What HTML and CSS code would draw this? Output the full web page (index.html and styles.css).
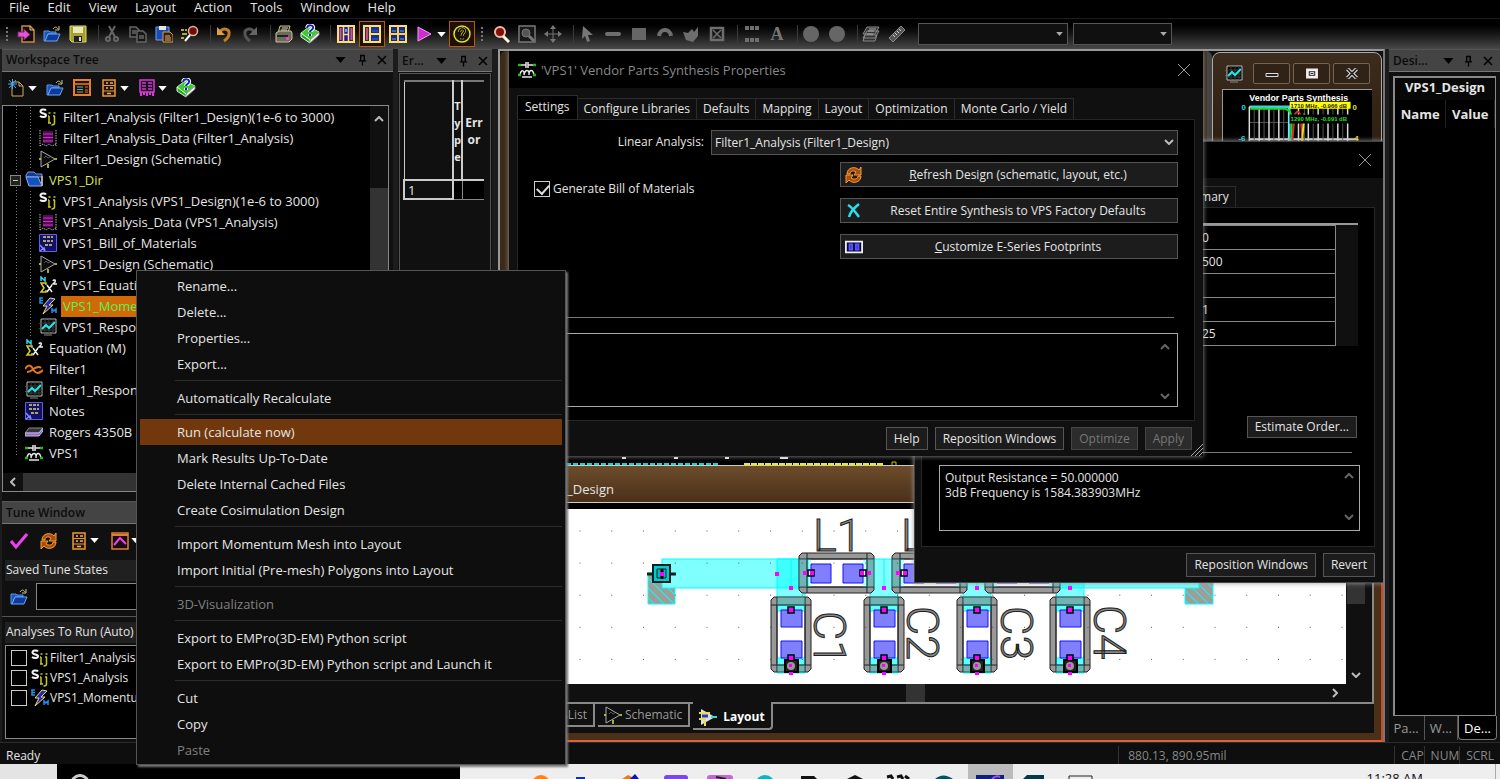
FILE: index.html
```
<!DOCTYPE html>
<html lang="en">
<head>
    <meta charset="UTF-8">
    <meta name="viewport" content="width=device-width, initial-scale=1.0">
    <title>Vendor Parts Synthesis</title>
    <link rel="stylesheet" href="styles.css">
</head>
<body>
    <svg class="sprite" aria-hidden="true">
        <symbol id="i-import" viewBox="0 0 18 18"><path d="M5 1h8l4 4v12H5z" fill="#120c04" stroke="#c88a3c" stroke-width="1.5"/><path d="M13 1v4h4" fill="none" stroke="#e8c890"/><path d="M1 7h6V4l6 5.500-6 5.500v-3H1z" fill="#e055d8" stroke="#7a1f78"/></symbol>
        <symbol id="i-open" viewBox="0 0 18 18"><path d="M1 6h5l1 1h6v2H5l-3 7H1z" fill="#1c55c0" stroke="#5b95e8"/><path d="M2 16l3-7h12l-3 7z" fill="#0d3a9c" stroke="#6ca8f0"/><path d="M10 4c2-3 4-2 5 0M16 1v4h-4" fill="none" stroke="#c8c890"/></symbol>
        <symbol id="i-save" viewBox="0 0 18 18"><path d="M1 1h16v16H3l-2-2z" fill="#a8a02c" stroke="#e0d868"/><path d="M4 2h10v6H4z" fill="#e8e8c0"/><path d="M5 11h8v6H5z" fill="#222"/><path d="M10 12h2v4h-2z" fill="#ddd"/></symbol>
        <symbol id="i-cut" viewBox="0 0 18 18"><g fill="none" stroke="#666" stroke-width="2"><path d="M6 1l6 11M12 1L6 12"/><circle cx="5" cy="14" r="2"/><circle cx="13" cy="14" r="2"/></g></symbol>
        <symbol id="i-copy" viewBox="0 0 18 18"><g fill="#161616" stroke="#666" stroke-width="1.500"><path d="M1 2h6l3 3v7H1z"/><path d="M8 6h6l3 3v8H8z"/><path d="M3 6h4M3 8h4M10 11h5M10 13h5"/></g></symbol>
        <symbol id="i-paste" viewBox="0 0 18 18"><path d="M1 2h13v13H1z" fill="#1b4cae" stroke="#6aa4f0"/><path d="M4 1h7v4H4z" fill="#e6e6e6"/><path d="M8 7h7l3 3v7H8z" fill="#30200c" stroke="#d89c50"/><path d="M10 11h5M10 13h6M10 15h6" stroke="#e8b060"/></symbol>
        <symbol id="i-find" viewBox="0 0 18 18"><circle cx="12" cy="6" r="4.500" fill="#6a1008" stroke="#e8b0a0" stroke-width="1.500"/><path d="M9 10l-5 6" stroke="#fff" stroke-width="2"/><path d="M0 5h3M4 5h2M1 9h5M0 13h3" stroke="#e8e030" stroke-width="1.500"/></symbol>
        <symbol id="i-undo" viewBox="0 0 18 18"><path d="M5 7c3-5 10-3 9 2 0 3-2 5-5 7" fill="none" stroke="#c08020" stroke-width="3"/><path d="M2 2v8h8z" fill="#e0a040"/></symbol>
        <symbol id="i-redo" viewBox="0 0 18 18"><path d="M13 7C10 2 3 4 4 9c0 3 2 5 5 7" fill="none" stroke="#555" stroke-width="3"/><path d="M16 2v8H8z" fill="#666"/></symbol>
        <symbol id="i-print" viewBox="0 0 18 18"><path d="M5 1h10l-2 7H3z" fill="#222" stroke="#d0c890"/><path d="M1 8l3-2h12l1 2v6l-3 3H1z" fill="#6c6a58" stroke="#c8c49c"/><path d="M2 11h11" stroke="#222" stroke-width="2"/><path d="M11 12h3v3h-3z" fill="#f040e0"/><path d="M7 3h6M6 5h6" stroke="#d8d8b0"/></symbol>
        <symbol id="i-book" viewBox="0 0 20 20"><path d="M1 9l8-6 10 5-9 8z" fill="#40c838" stroke="#a8f8a0"/><path d="M1 9l9 7v3L1 13z" fill="#26a020" stroke="#e0ffe0"/><path d="M10 16l9-8v3l-9 8z" fill="#fff" stroke="#888"/><path d="M7 4c1-4 7-3 6 0 0 2-3 2-3 4M10 10v2" fill="none" stroke="#fff" stroke-width="4"/><path d="M7 4c1-4 7-3 6 0 0 2-3 2-3 4M10 10v2" fill="none" stroke="#1828a8" stroke-width="2"/></symbol>
        <symbol id="i-tile1" viewBox="0 0 18 18"><path d="M1 1h16v16H1z" fill="#28189c" stroke="#ffe060" stroke-width="2"/><path d="M6.500 1v16M11.500 1v16M6 9.500h6" stroke="#ffe060" stroke-width="1.500"/><path d="M3.500 3v12M14.500 3v12" stroke="#c05a98" stroke-width="2"/><path d="M9 4v3" stroke="#58a8f8" stroke-width="2"/></symbol>
        <symbol id="i-tile2" viewBox="0 0 18 18"><path d="M1 1h16v16H1z" fill="#1c2c9c" stroke="#ffe060" stroke-width="2"/><path d="M7 1v16M7 9h10" stroke="#ffe060" stroke-width="2"/><path d="M4 3v12" stroke="#c05068" stroke-width="2"/><path d="M9 6h6M9 14h6" stroke="#3068d0"/></symbol>
        <symbol id="i-tile3" viewBox="0 0 18 18"><path d="M1 1h16v16H1z" fill="#14288c" stroke="#ffe060" stroke-width="2"/><path d="M9 1v16M1 9h16" stroke="#ffd050" stroke-width="2"/><path d="M3 6h4M11 6h4M3 14h4M11 14h4" stroke="#58a0f0"/></symbol>
        <symbol id="i-play" viewBox="0 0 18 18"><path d="M3 2l13 7-13 7z" fill="#c830d0" stroke="#f0a0f0"/></symbol>
        <symbol id="i-ask" viewBox="0 0 18 18"><circle cx="9" cy="9" r="8" fill="#181400" stroke="#e8e020" stroke-width="1.500"/><path d="M6.500 7c0-4 5-4 5-1 0 2-2.500 2-2.500 5M9 13v1.500" fill="none" stroke="#c8c050" stroke-width="3"/><path d="M6.500 7c0-4 5-4 5-1 0 2-2.500 2-2.500 5M9 13v1.500" fill="none" stroke="#000" stroke-width="1.500"/></symbol>
        <symbol id="i-zoom" viewBox="0 0 18 18"><circle cx="8" cy="7" r="5" fill="#801004" stroke="#f0b8a8" stroke-width="2"/><path d="M11 11l6 6" stroke="#fff8d8" stroke-width="3"/></symbol>
        <symbol id="i-zoompage" viewBox="0 0 18 18"><path d="M1 1h16v16H1z" fill="#181818" stroke="#777" stroke-width="1.500"/><circle cx="8" cy="8" r="4" fill="#555" stroke="#777"/><path d="M11 11l5 5" stroke="#777" stroke-width="3"/></symbol>
        <symbol id="i-move" viewBox="0 0 18 18"><path d="M9 2v14M2 9h14" stroke="#777"/><path d="M9 0l3 4H6zM9 18l3-4H6zM0 9l4-3v6zM18 9l-4-3v6z" fill="#777"/></symbol>
        <symbol id="i-cursor" viewBox="0 0 18 18"><path d="M5 1l10 9H10l2 6-3 1-2-6-3 3z" fill="#777"/></symbol>
        <symbol id="i-line" viewBox="0 0 18 18"><path d="M3 9h12" stroke="#6e6e6e" stroke-width="4" stroke-linecap="round"/></symbol>
        <symbol id="i-rect" viewBox="0 0 18 18"><path d="M2 3h14v12H2z" fill="#666"/></symbol>
        <symbol id="i-arc" viewBox="0 0 18 18"><path d="M3 11c1-8 11-8 12 0" fill="none" stroke="#6e6e6e" stroke-width="4"/></symbol>
        <symbol id="i-poly" viewBox="0 0 18 18"><path d="M1 7l5 1 4-4 2 3 4-5v9l-5 6-7-2z" fill="#6e6e6e"/></symbol>
        <symbol id="i-xbox" viewBox="0 0 18 18"><path d="M3 3h12v12H3z" fill="none" stroke="#6e6e6e" stroke-width="2.500"/><path d="M5 5l8 8M13 5l-8 8" stroke="#6e6e6e" stroke-width="1.500"/></symbol>
        <symbol id="i-dots" viewBox="0 0 18 18"><path d="M3 3h14M3 15h14" stroke="#6e6e6e" stroke-width="4" stroke-dasharray="4 1"/></symbol>
        <symbol id="i-circle" viewBox="0 0 18 18"><circle cx="9" cy="9" r="8" fill="#666"/></symbol>
        <symbol id="i-stack" viewBox="0 0 18 18"><path d="M5 2h12l-4 7H1zM5 6h12l-4 7H1zM3 10h12l-2 6H1z" fill="#333" stroke="#888"/><path d="M7 4h7M6 6h6M5 9h6" stroke="#aaa"/></symbol>
        <symbol id="i-ruler" viewBox="0 0 18 18"><path d="M1 13L13 1l4 4L5 17z" fill="#555" stroke="#888"/><path d="M5 10l2 2M7 8l2 2M9 6l2 2M11 4l2 2" stroke="#ccc"/></symbol>
        <symbol id="i-new" viewBox="0 0 18 18"><path d="M4 3h7l4 4v10H4z" fill="#0c0a06" stroke="#d8a860"/><path d="M11 3v4h4" fill="none" stroke="#d8a860"/><path d="M1 1l7 8M8 1L1 9M4.500 0v10M0 5h9" stroke="#48a8f8"/></symbol>
        <symbol id="i-window" viewBox="0 0 18 18"><path d="M1 1h16v15H1z" fill="#241204" stroke="#e08030" stroke-width="2"/><path d="M1 5h16" stroke="#e08030" stroke-width="1.500"/><path d="M4 8h6M4 13h6" stroke="#70a8b0"/><path d="M4 10.500h6" stroke="#30b8d0"/><path d="M12 8h3M12 11h3M12 13h3" stroke="#c87838"/></symbol>
        <symbol id="i-cabinet" viewBox="0 0 18 18"><path d="M3 1h12v16H3z" fill="#241404" stroke="#e89838" stroke-width="1.500"/><path d="M3 6.500h12M3 12h12" stroke="#e89838"/><path d="M6 4h2M10 4h3M6 9h2M10 9h3M7 14.500h4" stroke="#e8b070" stroke-width="1.500"/></symbol>
        <symbol id="i-purple" viewBox="0 0 18 18"><path d="M2 1h14v12H2z" fill="#2c0430" stroke="#d838d8" stroke-width="1.500"/><path d="M4 4h4M10 4h4M4 7h4M10 7h4M4 10h4M10 10h4" stroke="#e878e8"/><path d="M3 13v4M6 13v3M9 13v4M12 13v3M15 13v4" stroke="#d838d8" stroke-width="2"/></symbol>
        <symbol id="i-sij" viewBox="0 0 18 18"><path d="M7 2.500C6 1 1.500 1 1.500 3.500S7 5 7 7.200 3 9.500 1 8" fill="none" stroke="#f4f4f4" stroke-width="2"/><path d="M10 8v7M9 15h3M9 8h1M15.500 8v7c0 2-2 2-3 2M14 8h2M9.500 5h2M14.500 5h2" fill="none" stroke="#c8c820" stroke-width="1.500"/></symbol>
        <symbol id="i-data" viewBox="0 0 18 18"><path d="M1 1v16M17 1v16M1 17l3-2 3 2 3-2 3 2 4-2" fill="none" stroke="#b8b8b8" stroke-dasharray="1.500 1"/><path d="M4 2h10v12H4z" fill="#580858"/><path d="M4 5h10M4 8.500h10M4 12h10" stroke="#c838c0"/></symbol>
        <symbol id="i-sch" viewBox="0 0 18 18"><path d="M2 1l14 8L2 17z" fill="#0c0c0c" stroke="#aaa"/><path d="M5 8l2-2 2 2 2-1" fill="none" stroke="#555"/><path d="M0 9h2M16 9h2M9 14v4" stroke="#e0e040" stroke-width="1.500"/></symbol>
        <symbol id="i-folder" viewBox="0 0 18 18"><path d="M1 4l2-3h6l2 2h6v3H1z" fill="#123c90" stroke="#7898c8"/><path d="M1 6h12l4 9H4z" fill="#1450c0" stroke="#88b0f0"/><path d="M17 5v10" stroke="#aaa" stroke-width="2"/></symbol>
        <symbol id="i-note" viewBox="0 0 18 18"><path d="M.500.500h17v17H.500z" fill="#101068" stroke="#6060e0"/><path d="M4 3h10M4 7h10M6 11h8" stroke="#e0d860" stroke-width="1.500" stroke-dasharray="3 1"/><path d="M1 11l5 6M1 17l4-3 1 3" fill="none" stroke="#8888ff" stroke-width="1.500"/></symbol>
        <symbol id="i-eq" viewBox="0 0 18 18"><path d="M2 5V1l4 4V1" fill="none" stroke="#30d8e8" stroke-width="1.500"/><path d="M7 9V7H2l3 5-3 4h5v-2" fill="none" stroke="#d8d020" stroke-width="1.500"/><path d="M8 9l5 7M13 9l-5 7M14 5c1-2 3-1 2 1l-2 2h4" fill="none" stroke="#eee" stroke-width="1.500"/></symbol>
        <symbol id="i-em" viewBox="0 0 18 18"><path d="M11 1L4 9h4l-4 8 10-9h-4l6-6z" fill="#2828c0" stroke="#f0e060"/><path d="M4 1H1v5h3M1 3.500h3" fill="none" stroke="#1898f0" stroke-width="1.500"/><path d="M13 16v-4l2 2 2-2v4" fill="none" stroke="#1898f0" stroke-width="1.500"/></symbol>
        <symbol id="i-graph" viewBox="0 0 18 18"><path d="M2 1h15v14H2z" fill="#080808" stroke="#b8b8b8"/><path d="M6 1v14M10 1v14M14 1v14M2 5h15M2 9h15M2 12h15" stroke="#3a3a3a"/><path d="M3 11l4-4 3 3 6-6" fill="none" stroke="#20e8e8" stroke-width="2"/><path d="M0 5v1M0 10v1M5 17h8" stroke="#888"/></symbol>
        <symbol id="i-filter" viewBox="0 0 18 18"><path d="M0 9c3-5 6-4 8 0s5 6 10 1M2 12c4 0 5-2 8-4 3-1 4-2 6 0" fill="none" stroke="#e87820" stroke-width="2"/></symbol>
        <symbol id="i-board" viewBox="0 0 18 18"><path d="M4 5h14l-4 5H0z" fill="#333" stroke="#888"/><path d="M0 10h14l4-5v3l-4 5H0z" fill="#c850c8" stroke="#90d8f0"/></symbol>
        <symbol id="i-vps" viewBox="0 0 18 18"><path d="M3 4h5M10 4h5M8 1v6M10 1v6" stroke="#e8e8e8" stroke-width="1.500"/><path d="M2 14c1-6 5-5 4 0 1-6 6-6 5 0 0-6 4-6 5 0M4 16h10" fill="none" stroke="#e8e8e8" stroke-width="1.500"/><path d="M0 4h3M15 4h3M0 14h3M15 14h3" stroke="#18c018" stroke-width="2.500"/></symbol>
        <symbol id="i-check" viewBox="0 0 18 18"><path d="M1 9l5 6L17 2" fill="none" stroke="#f040f0" stroke-width="3"/></symbol>
        <symbol id="i-refresh" viewBox="0 0 18 18"><path d="M2 8c0-7 9-8 12-4l2-3v8H9l2-3c-3-2-6-1-6 2zM16 10c0 7-9 8-12 4l-3 3V9h7l-2 3c3 2 7 1 7-2z" fill="#b04c08" stroke="#f0a040"/></symbol>
        <symbol id="i-tunegraph" viewBox="0 0 18 18"><path d="M1 1h16v16H1z" fill="#180c14" stroke="#e08030" stroke-width="1.500"/><path d="M1 3h16" stroke="#e08030" stroke-width="2"/><path d="M3 13l6-7 6 6" fill="none" stroke="#f040e0" stroke-width="2"/></symbol>
        <symbol id="i-reset" viewBox="0 0 18 18"><path d="M3 3c4 2 8 8 11 12M14 2C9 6 5 10 4 15" fill="none" stroke="#28e0e8" stroke-width="2.500"/></symbol>
        <symbol id="i-foot" viewBox="0 0 20 16"><path d="M1 2h18v12H1z" fill="#080830" stroke="#eee" stroke-width="2"/><path d="M5 5h3v6H5zM12 5h3v6h-3z" fill="#2020d0" stroke="#5858ff" stroke-width="2"/></symbol>
        <symbol id="i-down" viewBox="0 0 10 6"><path d="M0 0h10L5 6z" fill="currentColor"/></symbol>
        <symbol id="i-pin" viewBox="0 0 10 12"><path d="M3 1h4v6H3zM1 7h8M5 7v5" fill="none" stroke="currentColor" stroke-width="1.500"/><path d="M7 1v6" stroke="currentColor"/></symbol>
        <symbol id="i-close" viewBox="0 0 10 10"><path d="M1 1l8 8M9 1L1 9" stroke="currentColor" stroke-width="1.500"/></symbol>
        <symbol id="i-thinclose" viewBox="0 0 12 12"><path d="M0 0l12 12M12 0L0 12" stroke="#999"/></symbol>
        <symbol id="i-chev" viewBox="0 0 10 6"><path d="M1 1l4 4 4-4" fill="none" stroke="currentColor" stroke-width="2"/></symbol>
    </svg>

    <nav class="menubar">
        <button>File</button><button>Edit</button><button>View</button><button>Layout</button><button>Action</button><button>Tools</button><button>Window</button><button>Help</button>
    </nav>

    <div class="toolbar">
        <span class="grip"></span>
        <button class="tool" aria-label="Import"><svg class="icon"><use href="#i-import"/></svg></button>
        <button class="tool" aria-label="Open"><svg class="icon"><use href="#i-open"/></svg></button>
        <button class="tool" aria-label="Save"><svg class="icon"><use href="#i-save"/></svg></button>
        <span class="sep"></span>
        <button class="tool" aria-label="Cut"><svg class="icon"><use href="#i-cut"/></svg></button>
        <button class="tool" aria-label="Copy"><svg class="icon"><use href="#i-copy"/></svg></button>
        <button class="tool" aria-label="Paste"><svg class="icon"><use href="#i-paste"/></svg></button>
        <button class="tool" aria-label="Find"><svg class="icon"><use href="#i-find"/></svg></button>
        <span class="sep"></span>
        <button class="tool" aria-label="Undo"><svg class="icon"><use href="#i-undo"/></svg></button>
        <button class="tool" aria-label="Redo"><svg class="icon"><use href="#i-redo"/></svg></button>
        <span class="sep"></span>
        <button class="tool" aria-label="Print"><svg class="icon"><use href="#i-print"/></svg></button>
        <button class="tool" aria-label="Help"><svg class="icon big"><use href="#i-book"/></svg></button>
        <span class="sep wide"></span>
        <button class="tool" aria-label="Tile 1"><svg class="icon"><use href="#i-tile1"/></svg></button>
        <button class="tool active" aria-label="Tile 2"><svg class="icon"><use href="#i-tile2"/></svg></button>
        <button class="tool" aria-label="Tile 3"><svg class="icon"><use href="#i-tile3"/></svg></button>
        <button class="tool split" aria-label="Run"><svg class="icon"><use href="#i-play"/></svg><svg class="arrow"><use href="#i-down"/></svg></button>
        <button class="tool active" aria-label="About"><svg class="icon"><use href="#i-ask"/></svg></button>
        <span class="grip"></span>
        <button class="tool" aria-label="Zoom"><svg class="icon"><use href="#i-zoom"/></svg></button>
        <button class="tool" aria-label="Zoom page"><svg class="icon"><use href="#i-zoompage"/></svg></button>
        <button class="tool" aria-label="Pan"><svg class="icon"><use href="#i-move"/></svg></button>
        <span class="sep"></span>
        <button class="tool" aria-label="Select"><svg class="icon"><use href="#i-cursor"/></svg></button>
        <button class="tool" aria-label="Line"><svg class="icon"><use href="#i-line"/></svg></button>
        <button class="tool" aria-label="Rectangle"><svg class="icon"><use href="#i-rect"/></svg></button>
        <button class="tool" aria-label="Arc"><svg class="icon"><use href="#i-arc"/></svg></button>
        <button class="tool" aria-label="Polygon"><svg class="icon"><use href="#i-poly"/></svg></button>
        <button class="tool" aria-label="Pad"><svg class="icon"><use href="#i-xbox"/></svg></button>
        <span class="sep"></span>
        <button class="tool" aria-label="Vias"><svg class="icon"><use href="#i-dots"/></svg></button>
        <button class="tool letter">A</button>
        <span class="sep"></span>
        <button class="tool" aria-label="Circle 1"><svg class="icon"><use href="#i-circle"/></svg></button>
        <button class="tool" aria-label="Circle 2"><svg class="icon"><use href="#i-circle"/></svg></button>
        <span class="sep"></span>
        <button class="tool" aria-label="Layers"><svg class="icon"><use href="#i-stack"/></svg></button>
        <button class="tool" aria-label="Ruler"><svg class="icon"><use href="#i-ruler"/></svg></button>
        <span class="combo layer"><select aria-label="Layer"></select><svg class="caret"><use href="#i-down"/></svg></span>
        <span class="combo unit"><select aria-label="Units"></select><svg class="caret"><use href="#i-down"/></svg></span>
    </div>

    <main class="main">
        <aside class="left">
            <header class="bar"><span>Workspace Tree</span><svg class="down"><use href="#i-down"/></svg><svg class="pin"><use href="#i-pin"/></svg><svg class="x"><use href="#i-close"/></svg></header>
            <div class="tools">
                <button aria-label="New"><svg class="icon"><use href="#i-new"/></svg><svg class="arrow"><use href="#i-down"/></svg></button>
                <button aria-label="Open"><svg class="icon"><use href="#i-open"/></svg></button>
                <button aria-label="Window"><svg class="icon"><use href="#i-window"/></svg></button>
                <button aria-label="Library"><svg class="icon"><use href="#i-cabinet"/></svg><svg class="arrow"><use href="#i-down"/></svg></button>
                <button aria-label="Data"><svg class="icon"><use href="#i-purple"/></svg><svg class="arrow"><use href="#i-down"/></svg></button>
                <button aria-label="Help"><svg class="icon big"><use href="#i-book"/></svg></button>
            </div>
            <div class="treebox">
                <ul class="tree">
                    <li>
                        <ul>
                            <li><svg class="icon"><use href="#i-sij"/></svg><span>Filter1_Analysis (Filter1_Design)(1e-6 to 3000)</span></li>
                            <li><svg class="icon"><use href="#i-data"/></svg><span>Filter1_Analysis_Data (Filter1_Analysis)</span></li>
                            <li><svg class="icon"><use href="#i-sch"/></svg><span>Filter1_Design (Schematic)</span></li>
                        </ul>
                    </li>
                    <li class="dir"><i class="minus"></i><svg class="icon"><use href="#i-folder"/></svg><span>VPS1_Dir</span></li>
                    <li>
                        <ul>
                            <li><svg class="icon"><use href="#i-sij"/></svg><span>VPS1_Analysis (VPS1_Design)(1e-6 to 3000)</span></li>
                            <li><svg class="icon"><use href="#i-data"/></svg><span>VPS1_Analysis_Data (VPS1_Analysis)</span></li>
                            <li><svg class="icon"><use href="#i-note"/></svg><span>VPS1_Bill_of_Materials</span></li>
                            <li><svg class="icon"><use href="#i-sch"/></svg><span>VPS1_Design (Schematic)</span></li>
                            <li><svg class="icon"><use href="#i-eq"/></svg><span>VPS1_Equation</span></li>
                            <li class="on"><svg class="icon"><use href="#i-em"/></svg><span>VPS1_Momentum</span></li>
                            <li><svg class="icon"><use href="#i-graph"/></svg><span>VPS1_Response</span></li>
                        </ul>
                    </li>
                    <li class="top"><svg class="icon"><use href="#i-eq"/></svg><span>Equation (M)</span></li>
                    <li class="top"><svg class="icon"><use href="#i-filter"/></svg><span>Filter1</span></li>
                    <li class="top"><svg class="icon"><use href="#i-graph"/></svg><span>Filter1_Response</span></li>
                    <li class="top"><svg class="icon"><use href="#i-note"/></svg><span>Notes</span></li>
                    <li class="top"><svg class="icon"><use href="#i-board"/></svg><span>Rogers 4350B 2</span></li>
                    <li class="top"><svg class="icon"><use href="#i-vps"/></svg><span>VPS1</span></li>
                </ul>
                <div class="vscroll"><svg class="chev up"><use href="#i-chev"/></svg><i class="thumb"></i></div>
                <div class="hscroll"><svg class="chev prev"><use href="#i-chev"/></svg><i class="thumb"></i></div>
            </div>

            <header class="bar tune"><span>Tune Window</span></header>
            <div class="tools">
                <button aria-label="Apply"><svg class="icon"><use href="#i-check"/></svg></button>
                <button aria-label="Refresh"><svg class="icon"><use href="#i-refresh"/></svg></button>
                <button aria-label="Library"><svg class="icon"><use href="#i-cabinet"/></svg><svg class="arrow"><use href="#i-down"/></svg></button>
                <button aria-label="Graph"><svg class="icon"><use href="#i-tunegraph"/></svg><svg class="arrow"><use href="#i-down"/></svg></button>
            </div>
            <label class="band" for="state">Saved Tune States</label>
            <div class="state"><svg class="icon"><use href="#i-open"/></svg><input id="state" type="text"></div>
            <div class="band">Analyses To Run (Auto)</div>
            <div class="runs">
                <label><input type="checkbox"><svg class="icon"><use href="#i-sij"/></svg>Filter1_Analysis</label>
                <label><input type="checkbox"><svg class="icon"><use href="#i-sij"/></svg>VPS1_Analysis</label>
                <label><input type="checkbox"><svg class="icon"><use href="#i-em"/></svg>VPS1_Momentum</label>
            </div>
        </aside>

        <aside class="errors">
            <header class="bar"><span>Er...</span><svg class="down"><use href="#i-down"/></svg><svg class="pin"><use href="#i-pin"/></svg><svg class="x"><use href="#i-close"/></svg></header>
            <div class="errbox">
                <table>
                    <thead><tr><th></th><th class="type">T<br>y<br>p<br>e</th><th class="err">Err<br>or</th></tr></thead>
                    <tbody><tr><td class="num">1</td><td></td><td></td></tr></tbody>
                </table>
            </div>
        </aside>

        <section class="desk">
            <div class="win back"></div>

            <section class="win graph">
                <header><svg class="icon"><use href="#i-graph"/></svg>
                    <button aria-label="Minimize"><svg viewBox="0 0 14 10"><path d="M1 5h12v3H1z" fill="#222" stroke="#ddd"/></svg></button>
                    <button aria-label="Maximize"><svg viewBox="0 0 14 12"><path d="M2 2h10v8H2z" fill="none" stroke="#eee" stroke-width="3"/><path d="M5 5h4v2H5z" fill="#222" stroke="#eee"/></svg></button>
                    <button aria-label="Close"><svg viewBox="0 0 14 12"><path d="M2 1l10 10M12 1L2 11" stroke="#eee" stroke-width="4"/><path d="M2 1l10 10M12 1L2 11" stroke="#222" stroke-width="2"/></svg></button>
                </header>
                <svg class="plot" viewBox="1221 88 150 60">
                    <path d="M1247 105h101M1247 138h110" stroke="#ddd" stroke-width="2"/>
                    <path d="M1247 121h101" stroke="#555"/>
                    <path d="M1252 105v40M1262 105v40M1272 105v40M1282 105v40M1303 105v40M1312 105v40M1322 105v40M1332 105v40M1342 105v40" stroke="#555"/>
                    <path d="M1247 105v40M1257 105v40M1267 105v40M1277 105v40M1287 105v40M1297 105v40M1307 105v40M1317 105v40M1327 105v40M1337 105v40M1347 105v40" stroke="#ddd" stroke-width="1.500"/>
                    <path d="M1248 105h40v43" fill="none" stroke="#28d8e8" stroke-width="2"/>
                    <path d="M1248 107h35q7 1 7 10v31" fill="none" stroke="#20d820" stroke-width="2"/>
                    <path d="M1290 148l3-34q3-8 6 0l3 34" fill="none" stroke="#d83020" stroke-width="2"/>
                    <path d="M1300 148l3-36" stroke="#e8e020" stroke-width="2"/>
                    <text x="1247" y="99" fill="#fff" font-size="9">Vendor Parts Synthesis</text>
                    <path d="M1288 100h62v7h-62z" fill="#ff0"/>
                    <text x="1289" y="106" fill="#222" font-size="6">1710 MHz, -0.966 dB</text>
                    <path d="M1288 113h62v9h-62z" fill="#000"/>
                    <text x="1289" y="120" fill="#20e020" font-size="6">1290 MHz, -0.091 dB</text>
                    <text x="1239" y="108" fill="#28d8e8" font-size="8">0</text>
                    <text x="1236" y="140" fill="#28d8e8" font-size="8">-6</text>
                    <text x="1352" y="108" fill="#e8e020" font-size="8">0</text>
                    <text x="1351" y="140" fill="#e8e020" font-size="8">-4</text>
                </svg>
            </section>

            <div class="win strip">
                <svg viewBox="566 456 348 9"><path d="M622 458h4M674 458h4M725 458h4M780 458h8" stroke="#eee" stroke-width="2"/><path d="M566 464h154" stroke="#0dd" stroke-width="2" stroke-dasharray="5 2"/><path d="M744 464h140" stroke="#ee0" stroke-width="2" stroke-dasharray="6 1"/><path d="M892 466v-4h4v4" fill="none" stroke="#cc0"/></svg>
            </div>

            <section class="win layout">
                <header>_Design</header>
                <div class="inner">
                    <div class="canvas">
                        <svg viewBox="514 509 831 173">
                            <defs>
                                <pattern id="dots" x="579.500" y="530.500" width="31.750" height="32.100" patternUnits="userSpaceOnUse"><path d="M0 0h1v1H0z" fill="#555"/></pattern>
                                <pattern id="hatch" width="7" height="7" patternUnits="userSpaceOnUse" patternTransform="rotate(-45)"><path d="M0 0h7v7H0z" fill="#a09c98"/><path d="M0 0v7" stroke="#0ff" stroke-width="2"/></pattern>
                                <g id="body">
                                    <path d="M3 0h34l3 3v69l-3 3H3l-3-3V3zM6 8v60h28V8z" fill="#999" fill-rule="evenodd" stroke="#222"/>
                                    <path d="M0 8h40M0 68h40M6 0v75M34 0v75" fill="none" stroke="#222"/>
                                </g>
                                <g id="pads">
                                    <path d="M10 13h21v17H10zM10 44h21v17H10z" fill="#8080ff" stroke="#1010ff"/>
                                </g>
                                <g id="cap">
                                    <path d="M6-38h28v52H6zM6 61h28v15H6z" fill="#0ff" fill-opacity=".5" stroke="#0ff"/>
                                    <use href="#body"/>
                                    <path d="M6 0h28v14H6zM6 61h28v15H6z" fill="#0ff" fill-opacity=".25"/>
                                    <path d="M20-38v29" stroke="#0ff"/>
                                    <use href="#pads"/>
                                    <path d="M17 10h6v6h-6zM17 58h6v6h-6z" fill="none" stroke="#000" stroke-width="1.500"/>
                                    <path d="M14 63h13v12H14z" fill="#222" stroke="#000" stroke-width="2"/><circle cx="20" cy="69" r="4" fill="#999"/>
                                    <path d="M18-11h4v4h-4zM18 11h4v4h-4zM18 59h4v4h-4zM18 67h3v3h-3zM18 75h4v3h-4z" fill="#f0f"/>
                                </g>
                                <g id="ind">
                                    <use href="#body" transform="translate(0 39) rotate(-90)"/>
                                    <path d="M0 5h12v28H0zM64 5h12v28H64z" fill="#0ff" fill-opacity=".25"/>
                                    <path d="M12 10h20v19H12zM44 10h20v19H44z" fill="#8080ff" stroke="#1010ff"/>
                                    <path d="M9 16h6v6H9zM61 16h6v6h-6z" fill="none" stroke="#000" stroke-width="1.500"/>
                                    <path d="M4 17h4v4H4zM11 17h4v4h-4zM61 17h4v4h-4zM68 17h4v4h-4z" fill="#f0f"/>
                                </g>
                            </defs>
                            <path d="M514 509h831v173H514z" fill="#fff"/>
                            <path d="M648 573h27v31h-27zM1185 573h28v31h-28z" fill="url(#hatch)" stroke="#0ff"/>
                            <path d="M662 559h146v29H662zM1056 559h143v29h-143z" fill="#80ffff" stroke="#0ff"/>
                            <use href="#cap" x="771" y="597"/><use href="#cap" x="864" y="597"/><use href="#cap" x="957" y="597"/><use href="#cap" x="1050" y="597"/>
                            <use href="#ind" x="799" y="554"/><use href="#ind" x="892" y="554"/><use href="#ind" x="985" y="554"/>
                            <path d="M775 572h4v4h-4z" fill="#f0f"/>
                            <path d="M647 574h29" stroke="#122" stroke-width="3"/>
                            <path d="M653 565h17v17h-17z" fill="#0cc" stroke="#022" stroke-width="2"/>
                            <path d="M657 569h9v9h-9z" fill="#0bb" stroke="#022"/>
                            <path d="M662 569v10" stroke="#000" stroke-width="3"/><path d="M660 572h4v4h-4z" fill="#f0f"/>
                            <path d="M514 509h831v173H514z" fill="url(#dots)"/>
                            <g class="ref">
                                <text x="813" y="551">L1</text><text x="901" y="551">L2</text>
                                <text transform="translate(814 611) rotate(90)">C1</text>
                                <text transform="translate(907 606) rotate(90)">C2</text>
                                <text transform="translate(1001 606) rotate(90)">C3</text>
                                <text transform="translate(1094 605) rotate(90)">C4</text>
                            </g>
                        </svg>
                    </div>
                    <div class="vbar"><i class="thumb"></i><svg class="chev"><use href="#i-chev"/></svg></div>
                    <div class="hbar"><i class="thumb"></i><svg class="chev next"><use href="#i-chev"/></svg></div>
                    <div class="sheets">
                        <button>PartsList</button>
                        <button><svg class="icon"><use href="#i-sch"/></svg>Schematic</button>
                        <button class="on"><svg class="icon" viewBox="0 0 18 18"><path d="M2 1l14 8L2 17z" fill="#ddd"/><path d="M0 5h11M0 11h7M6 13v5" stroke="#e8e040" stroke-width="2"/><path d="M3 8h6" stroke="#2838c0" stroke-width="3"/><path d="M12 9h6" stroke="#30e0e8" stroke-width="2"/></svg>Layout</button>
                        <span></span>
                    </div>
                </div>
            </section>

            <section class="win dialog filter">
                <header><svg class="tclose"><use href="#i-thinclose"/></svg></header>
                <div class="tabs"><button>Summary</button></div>
                <div class="page">
                    <div class="grid">
                        <table>
                            <tr><td>0</td></tr>
                            <tr><td>500</td></tr>
                            <tr><td></td></tr>
                            <tr><td>1</td></tr>
                            <tr><td>25</td></tr>
                        </table>
                    </div>
                    <div class="order"><button class="btn">Estimate Order...</button></div>
                    <hr>
                    <textarea aria-label="Messages" readonly>Output Resistance = 50.000000
3dB Frequency is 1584.383903MHz</textarea>
                    <svg class="chev s1 up"><use href="#i-chev"/></svg><svg class="chev s2"><use href="#i-chev"/></svg>
                </div>
                <footer><button class="btn">Reposition Windows</button><button class="btn">Revert</button></footer>
            </section>

            <section class="win dialog vps">
                <header><svg class="icon"><use href="#i-vps"/></svg><h1>'VPS1' Vendor Parts Synthesis Properties</h1><svg class="tclose"><use href="#i-thinclose"/></svg></header>
                <div class="tabs">
                    <button class="on">Settings</button><button>Configure Libraries</button><button>Defaults</button><button>Mapping</button><button>Layout</button><button>Optimization</button><button>Monte Carlo / Yield</button>
                </div>
                <div class="page">
                    <div class="analysis">
                        <label for="analysis">Linear Analysis:</label>
                        <span class="combo"><select id="analysis"><option>Filter1_Analysis (Filter1_Design)</option></select><svg class="chev"><use href="#i-chev"/></svg></span>
                    </div>
                    <div class="split">
                        <label><input type="checkbox" checked>Generate Bill of Materials</label>
                        <div class="actions">
                            <button class="btn"><svg class="icon"><use href="#i-refresh"/></svg><span><u>R</u>efresh Design (schematic, layout, etc.)</span></button>
                            <button class="btn"><svg class="icon"><use href="#i-reset"/></svg><span>Reset Entire Synthesis to VPS Factory Defaults</span></button>
                            <button class="btn"><svg class="icon"><use href="#i-foot"/></svg><span><u>C</u>ustomize E-Series Footprints</span></button>
                        </div>
                    </div>
                    <hr>
                    <textarea aria-label="Log" readonly></textarea>
                    <svg class="chev s1 up"><use href="#i-chev"/></svg><svg class="chev s2"><use href="#i-chev"/></svg>
                </div>
                <footer><button class="btn">Help</button><button class="btn">Reposition Windows</button><button class="btn" disabled>Optimize</button><button class="btn" disabled>Apply</button></footer>
                <svg class="sizer" viewBox="0 0 12 12"><path d="M0 12L12 0M4 12l8-8M8 12l4-4" stroke="#aaa"/></svg>
            </section>
        </section>

        <aside class="props">
            <header class="bar"><span>Desi...</span><svg class="down"><use href="#i-down"/></svg><svg class="pin"><use href="#i-pin"/></svg><svg class="x"><use href="#i-close"/></svg></header>
            <div class="propbox">
                <table>
                    <caption>VPS1_Design</caption>
                    <tr><th>Name</th><th>Value</th></tr>
                </table>
            </div>
            <div class="proptabs"><button>Pa...</button><button>W...</button><button class="on">De...</button></div>
        </aside>
    </main>

    <footer class="status">
        <span class="ready">Ready</span><span class="pos">880.13, 890.95mil</span><span>CAP</span><span>NUM</span><span>SCRL</span>
    </footer>

    <div class="taskbar">
        <div class="start"></div>
        <div class="search"><i></i></div>
        <div class="apps">
            <svg viewBox="0 0 45 15"><circle cx="23" cy="20" r="9" fill="#ff8020"/></svg>
            <svg viewBox="0 0 45 15"><path d="M13 13h9v2h-9z" fill="#1030b0"/></svg>
            <svg viewBox="0 0 45 15"><path d="M14 15l6-4 8 4z" fill="#e87828"/><path d="M22 15l5-5 4 5z" fill="#1010b0"/></svg>
            <svg viewBox="0 0 45 15"><rect x="11" y="11" width="24" height="10" rx="3" fill="#7848e8"/></svg>
            <svg viewBox="0 0 45 15"><rect x="9" y="11" width="26" height="10" rx="3" fill="#c068d0"/><path d="M18 13l10 2" stroke="#222" stroke-width="2"/></svg>
            <svg viewBox="0 0 45 15"><circle cx="22" cy="21" r="10" fill="#18b0c0"/></svg>
            <svg viewBox="0 0 45 15"><path d="M13 12h13l3 3H13z" fill="#111"/></svg>
            <svg viewBox="0 0 45 15"><path d="M14 15l8-4 8 4z" fill="#111"/></svg>
            <svg viewBox="0 0 45 15"><path d="M9 13l4-1 2 3M19 13l4-1 2 3M27 12l4 3" stroke="#111" stroke-width="3" fill="none"/></svg>
            <svg viewBox="0 0 45 15"><path d="M12 15q8-7 18 0z" fill="#0a5058"/></svg>
            <svg class="on" viewBox="0 0 45 15"><path d="M8 11h28v4H8z" fill="#102078"/><path d="M24 15q4-4 8-2" stroke="#a050f0" stroke-width="2" fill="none"/></svg>
            <svg viewBox="0 0 45 15"><path d="M10 15l4-4h17v4z" fill="#083848"/></svg>
            <svg viewBox="0 0 45 15"><path d="M11 16v-4h23v4" fill="none" stroke="#222"/></svg>
        </div>
        <time>11:28 AM</time>
        <i class="peek"></i>
    </div>

    <ul class="context">
        <li><button>Rename...</button></li>
        <li><button>Delete...</button></li>
        <li><button>Properties...</button></li>
        <li><button>Export...</button></li>
        <li class="rule"></li>
        <li><button>Automatically Recalculate</button></li>
        <li class="rule"></li>
        <li><button class="on">Run (calculate now)</button></li>
        <li><button>Mark Results Up-To-Date</button></li>
        <li><button>Delete Internal Cached Files</button></li>
        <li><button>Create Cosimulation Design</button></li>
        <li class="rule"></li>
        <li><button>Import Momentum Mesh into Layout</button></li>
        <li><button>Import Initial (Pre-mesh) Polygons into Layout</button></li>
        <li class="rule"></li>
        <li><button disabled>3D-Visualization</button></li>
        <li class="rule"></li>
        <li><button>Export to EMPro(3D-EM) Python script</button></li>
        <li><button>Export to EMPro(3D-EM) Python script and Launch it</button></li>
        <li class="rule"></li>
        <li><button>Cut</button></li>
        <li><button>Copy</button></li>
        <li><button disabled>Paste</button></li>
    </ul>
</body>
</html>
```
FILE: styles.css
```
* { box-sizing: border-box; }
body { margin: 0; height: 100vh; display: flex; flex-direction: column; overflow: hidden; background: #101010; color: #e4e4e4; font: 13px/20px "Open Sans", "Noto Sans", sans-serif; position: relative; }
button, input, select, textarea { font: inherit; color: inherit; margin: 0; }
button { background: none; border: 0; padding: 0; white-space: nowrap; }
ul { list-style: none; margin: 0; padding: 0; }
svg { display: block; flex: none; }
.sprite { position: absolute; width: 0; height: 0; }
.icon { width: 18px; height: 18px; }
.icon.big { width: 20px; height: 20px; }
.arrow { width: 9px; height: 5px; color: #fff; }
.chev { width: 10px; height: 6px; color: #bbb; }
.chev.up { transform: rotate(180deg); }
.chev.prev { transform: rotate(90deg); }
.chev.next { transform: rotate(-90deg); }
.thumb { display: block; background: #333; }

/* menu and toolbar */
.menubar { display: flex; height: 18px; background: #000; }
.menubar button { padding: 0 9px; line-height: 14px; height: 14px; }
.toolbar { display: flex; align-items: center; height: 31px; background: linear-gradient(#000 20%, #161616 50%, #484848); border-top: 1px solid #1c1c1c; }
.grip { width: 4px; height: 14px; margin: 0 3px 0 6px; background: repeating-linear-gradient(#777 0 2px, transparent 2px 4px); background-size: 2px 100%; background-repeat: no-repeat; }
.tool { width: 26px; height: 26px; display: flex; align-items: center; justify-content: center; }
.tool.active { border: 1px solid #b85a10; background: #1e1004; }
.tool.split { width: 38px; gap: 4px; }
.tool.letter { font: bold 18px "Liberation Serif", serif; color: #777; }
.sep { width: 8px; height: 18px; border-right: 1px solid #3a3a3a; }
.sep.wide { margin-right: 2px; }
.combo { position: relative; display: block; }
.combo select { appearance: none; width: 100%; height: 100%; background: #101010; border: 1px solid #555; border-radius: 0; padding: 0 4px; display: block; }
.combo .caret { position: absolute; right: 5px; top: 9px; width: 7px; height: 4px; color: #aaa; }
.layer { width: 150px; height: 22px; margin-left: 8px; }
.unit { width: 99px; height: 22px; margin-left: 5px; }

/* docked panels */
.main { flex: 1; display: flex; min-height: 0; background: #1c1c1c; }
.bar { display: flex; align-items: center; height: 23px; padding: 0 6px 0 4px; background: #444; border-bottom: 1px solid #777; border-top: 1px solid #555; color: #0c0c0c; font-weight: 600; font-size: 12px; }
.bar span { flex: 1; }
.bar svg { color: #000; margin-left: 12px; }
.bar .down { width: 11px; height: 6px; }
.bar .pin { width: 9px; height: 12px; }
.bar .x { width: 10px; height: 10px; margin-left: 10px; }
.left { width: 391px; margin: 0 5px 0 2px; background: #101010; display: flex; flex-direction: column; }
.tools { display: flex; align-items: center; height: 33px; padding-left: 6px; gap: 9px; }
.tools button { display: flex; align-items: center; gap: 2px; }
.treebox { position: relative; width: 387px; height: 388px; background: #000; border: 1px solid #888; overflow: hidden; display: grid; grid-template: minmax(0, 1fr) 18px / 1fr 18px; }
.tree { padding-top: 1px; background: repeating-linear-gradient(#777 0 1px, #000 1px 3px) 13px 0 / 1px 350px no-repeat; }
.tree ul { margin-left: 27px; background: repeating-linear-gradient(#777 0 1px, #000 1px 3px) 0 0 / 1px 100% no-repeat; }
.tree ul > li, .top, .dir { display: flex; align-items: center; height: 21px; white-space: nowrap; gap: 4px; }
.tree ul > li { padding-left: 9px; }
.tree span { padding: 0 2px; }
.top { padding-left: 22px; }
.dir { padding-left: 7px; color: #d8e060; }
.minus { width: 11px; height: 11px; border: 1px solid #888; background: linear-gradient(#cc8, #cc8) 2px 4px / 5px 1px no-repeat #222; }
.tree .on span { background: #d06a08; color: #58f058; height: 21px; }
.vscroll { background: #101010; padding-top: 10px; overflow: hidden; }
.vscroll .chev { margin: 0 auto; }
.vscroll .thumb { height: 300px; margin-top: 66px; }
.hscroll { grid-column: 1 / 3; background: #101010; display: flex; align-items: center; }
.hscroll .chev { margin: 0 5px; }
.hscroll .thumb { flex: 1; height: 18px; }
.tune { margin-top: 9px; }
.tune + .tools { gap: 12px; padding-left: 8px; }
.band { margin: 3px 4px 0 3px; height: 21px; padding-left: 1px; background: #202020; font-size: 12px; }
.state { display: flex; align-items: center; gap: 8px; padding: 0 4px 4px 8px; height: 36px; border-bottom: 1px solid #555; margin-bottom: 2px; }
.state input { flex: 1; height: 27px; background: #000; border: 1px solid #888; }
.runs { margin: 2px 4px 3px 3px; padding: 2px 5px; height: 94px; background: #000; border: 1px solid #888; font-size: 12px; }
.runs label { display: flex; align-items: center; gap: 4px; height: 20px; }
.runs .icon { margin-right: -3px; }
input[type="checkbox"] { appearance: none; width: 16px; height: 16px; border: 1px solid #ccc; background: #000; }

.errors { width: 94px; margin-right: 6px; background: #101010; display: flex; flex-direction: column; }
.errbox { flex: 1; margin: 1px 1px 0 1px; padding: 6px 8px 0 3px; border: 1px solid #555; overflow: hidden; }
.errbox table { border-collapse: collapse; table-layout: fixed; width: 80px; border-top: 2px solid #777; }
.errbox th { height: 99px; padding: 0; border: 1px solid #ccc; width: 49px; line-height: 17px; border-right-width: 2px; border-bottom-width: 2px; font-size: 12px; }
.errbox .type { width: 9px; font-size: 11px; }
.errbox .err { width: 22px; padding-left: 1px; border-right: 0; }
.errbox td { height: 19px; padding: 0; border: 1px solid #888; background: #000; line-height: 16px; }
.errbox td:last-child { border-right: 0; }
.errbox .num { background: #101010; padding-left: 3px; border: 2px solid #ccc; }

/* windows on the workspace */
.desk { flex: 1; position: relative; min-width: 0; background: #101010; border-top: 2px solid #999; border-left: 2px solid #999; border-right: 2px solid #777; margin-right: 4px; overflow: hidden; }
.win { position: absolute; }
.back { left: 0; top: 0; width: 712px; height: 415px; background: #3c2a18; border-radius: 6px 6px 0 0; border-right: 5px solid #444; }
.graph { left: 712px; top: 1px; width: 170px; height: 110px; padding: 7px 9px 0; background: linear-gradient(#3c2c1e, #2a1c10); border: 1px solid #aaa; border-radius: 8px 8px 0 0; }
.graph header { display: flex; align-items: center; gap: 3px; height: 29px; padding: 0 2px 2px 0; justify-content: flex-end; }
.graph header .icon { margin-right: auto; margin-left: 3px; }
.graph header button { width: 37px; height: 21px; border: 1px solid #77644c; border-radius: 2px; background: #302217; display: flex; align-items: center; justify-content: center; }
.graph header button svg { width: 14px; height: 11px; }
.plot { width: 150px; height: 60px; background: #000; border-top: 1px solid #999; border-left: 1px solid #999; font-family: "Liberation Sans", Arial, sans-serif; font-weight: bold; }
.strip { left: 66px; top: 405px; width: 348px; height: 9px; background: #000; }
.layout { left: 8px; top: 414px; right: 0; bottom: 0; background: #4a3018; border-top: 1px solid #ccc; border-right: 2px solid #d04820; border-bottom: 2px solid #e0603c; padding: 0 7px 7px 5px; display: flex; flex-direction: column; }
.layout header { height: 37px; padding: 13px 0 0 54px; background: linear-gradient(#6c4c2c, #4a3018); border-bottom: 1px solid #ccc; line-height: 20px; }
.inner { flex: 1; display: grid; grid-template: 1fr 20px 29px / 1fr 28px; background: #101010; border-top: 6px solid #000; min-height: 0; }
.canvas { overflow: hidden; min-height: 0; background: #fff; margin-left: 1px; }
.canvas svg { width: 831px; height: 173px; }
.ref text { font: 300 45px Roboto, sans-serif; fill: #888; stroke: #222; stroke-width: 1px; }
.vbar { display: flex; flex-direction: column; justify-content: space-between; border-right: 2px solid #888; padding-bottom: 6px; }
.vbar .thumb { height: 95px; width: 18px; margin-left: 1px; }
.vbar .chev { margin-left: 5px; }
.hbar { grid-column: 1 / 3; display: flex; align-items: center; border-right: 2px solid #888; border-bottom: 2px solid #888; padding-right: 32px; justify-content: space-between; }
.hbar .thumb { width: 19px; height: 18px; margin-left: 393px; }
.sheets { grid-column: 1 / 3; display: flex; align-items: flex-start; padding-left: 20px; gap: 3px; font-size: 12px; }
.sheets button { display: flex; align-items: center; gap: 3px; height: 23px; padding: 0 6px; border: solid #888; border-width: 0 2px 2px 0; color: #999; }
.sheets button:first-child { width: 62px; justify-content: flex-end; }
.sheets .on { height: 28px; margin-top: -2px; padding-top: 3px; gap: 6px; background: #101010; color: #fff; font-weight: bold; border-radius: 0 0 4px 0; }

.dialog { display: flex; flex-direction: column; background: #101010; font-size: 12px; box-shadow: 0 0 5px #999; }
.dialog header { display: flex; align-items: center; height: 37px; padding: 0 13px 0 9px; background: #000; }
.dialog h1 { flex: 1; margin: 0 0 0 5px; font: 13px/20px "Open Sans", sans-serif; color: #888; }
.tclose { width: 12px; height: 12px; margin-left: auto; }
.tabs { display: flex; align-items: flex-end; }
.tabs button { height: 21px; padding: 0 6px; border: solid #2c2c2c; border-width: 1px 1px 0 0; line-height: 20px; }
.tabs .on { height: 24px; padding: 0 7px 2px; background: #000; border-left-width: 1px; }
.page { position: relative; flex: 1; background: #000; border: 1px solid #262626; display: flex; flex-direction: column; }
.btn { height: 24px; padding: 0 7px; background: #1c1c1c; border: 1px solid #555; }
.btn:disabled { background: #2c2c2c; border-color: #444; color: #777; }
.dialog footer { display: flex; justify-content: flex-end; align-items: center; gap: 7px; }
.dialog hr { width: auto; margin: 0; border: 0; border-top: 1px solid #777; }
.dialog textarea { display: block; resize: none; background: #000; border: 1px solid #aaa; line-height: 15px; padding: 4px 5px; overflow: hidden; }
.s1, .s2 { position: absolute; right: 24px; color: #666; }

.vps { left: 9px; top: 0; width: 694px; height: 405px; }
.vps .tabs { height: 31px; padding-left: 8px; }
.vps .page { margin: 0 8px; padding: 10px 16px 0; }
.analysis { display: flex; align-items: center; justify-content: flex-end; gap: 7px; }
.analysis label { line-height: 16px; padding-bottom: 2px; }
.analysis .combo { width: 467px; height: 25px; }
.analysis select { background: #1c1c1c; padding: 0 3px; }
.analysis .chev { position: absolute; right: 4px; top: 9px; }
.vps .split { display: flex; justify-content: space-between; padding-top: 7px; }
.vps .split label { display: flex; align-items: center; gap: 3px; height: 53px; }
.vps input:checked { position: relative; }
.vps input:checked::after { content: ""; position: absolute; left: 2px; top: 2px; width: 10px; height: 6px; border: solid #ddd; border-width: 0 0 2px 2px; transform: rotate(-48deg); }
.actions { display: flex; flex-direction: column; gap: 11px; width: 338px; }
.actions .btn { display: flex; align-items: center; height: 25px; padding: 0 4px; }
.actions span { flex: 1; text-align: center; }
.vps hr { margin: 58px 4px 15px 0; }
.vps textarea { height: 74px; }
.vps .s1 { top: 224px; }
.vps .s2 { top: 273px; }
.vps footer { height: 35px; padding: 0 11px; }
.vps footer .btn { height: 23px; }
.sizer { position: absolute; right: 0; bottom: 0; width: 12px; height: 12px; }

.filter { left: 414px; top: 90px; width: 471px; height: 442px; border: 1px solid #444; }
.filter header { padding-right: 13px; }
.filter .tabs { height: 31px; padding-left: 254px; }
.filter .page { margin: 0 9px 0 6px; padding: 15px 14px; }
.grid { padding-left: 100px; margin-right: 2px; border-top: 2px solid #999; background: #101010; }
.filter table { border-collapse: collapse; width: 300px; background: #000; }
.filter td { height: 24px; padding: 0 0 0 165px; border: 1px solid #888; }
.filter .order { margin: 70px 3px 14px; display: flex; justify-content: flex-end; }
.filter .order .btn { height: 22px; }
.filter hr { margin-right: 8px; }
.filter textarea { margin: 12px 0 0 3px; height: 66px; }
.filter .s1 { top: 265px; right: 20px; }
.filter .s2 { top: 306px; right: 20px; }
.filter footer { height: 36px; padding-right: 9px; }

/* design properties */
.props { width: 111px; background: #101010; display: flex; flex-direction: column; }
.props .bar { padding-right: 7px; }
.props .bar svg { margin-left: 10px; }
.propbox { flex: 1; margin: 4px 4px 0 4px; border: 2px solid #888; border-width: 2px 1px 1px 2px; background: #000; }
.propbox table { border-collapse: collapse; width: 100%; }
.propbox caption { font-weight: bold; height: 22px; line-height: 18px; background: #080808; text-align: center; }
.propbox th { height: 28px; padding: 0; border-right: 1px solid #222; }
.proptabs { display: flex; height: 26px; padding: 0 3px 2px 0; justify-content: flex-end; }
.proptabs button { padding: 0 5px; color: #999; border-right: 1px solid #555; }
.proptabs .on { background: #000; color: #fff; border: solid #777; border-width: 0 1px 1px; border-radius: 0 0 4px 4px; }

/* status and task bars */
.status { display: flex; align-items: center; height: 22px; border-top: 1px solid #2c2c2c; background: #0e0e0e; font-size: 12px; color: #888; padding: 4px 6px 0 0; }
.status span { padding: 0 0 0 6px; border-left: 1px solid #333; }
.status .ready { flex: 1; color: #e4e4e4; border: 0; }
.status .pos { width: 276px; padding-left: 9px; }
.taskbar { display: flex; height: 15px; background: #eee; overflow: hidden; color: #111; }
.start { width: 57px; background: #e4e4e4; }
.search { width: 403px; background: #000; padding: 10px 0 0 13px; }
.search i { display: block; width: 20px; height: 20px; border: 3px solid #ccc; border-radius: 50%; }
.apps { display: flex; padding-left: 58px; flex: 1; }
.apps svg { width: 45px; height: 15px; }
.apps .on { background: #bbb; }
.taskbar time { padding: 4px 72px 0 0; line-height: 20px; }
.peek { width: 5px; border-left: 1px solid #aaa; }

.context { position: absolute; left: 136px; top: 270px; width: 430px; padding: 2px 3px 1px; background: #0e0e0e; border: 1px solid #555; box-shadow: 2px 2px 2px #777; }
.context button { display: block; width: 100%; height: 26px; padding: 0 0 0 37px; text-align: left; }
.context .on { background: #70380c; }
.context button:disabled { color: #808080; }
.rule { height: 1px; margin: 3px 0 4px 35px; background: #2c2c2c; }
```
